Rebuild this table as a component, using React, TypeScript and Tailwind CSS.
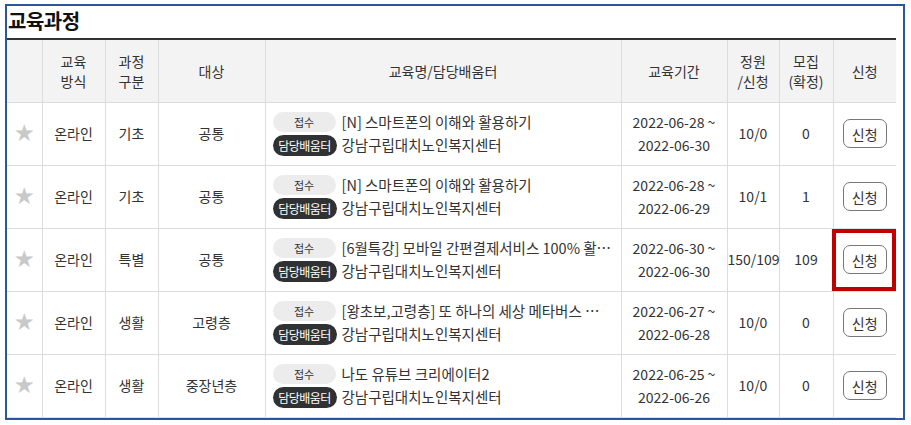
import React from "react";

interface Course {
  method: string;
  kind: string;
  target: string;
  title: string;
  place: string;
  start: string;
  end: string;
  quota: string;
  confirmed: string;
  highlight?: boolean;
}

const courses: Course[] = [
  { method: "온라인", kind: "기초", target: "공통", title: "[N] 스마트폰의 이해와 활용하기", place: "강남구립대치노인복지센터", start: "2022-06-28", end: "2022-06-30", quota: "10/0", confirmed: "0" },
  { method: "온라인", kind: "기초", target: "공통", title: "[N] 스마트폰의 이해와 활용하기", place: "강남구립대치노인복지센터", start: "2022-06-28", end: "2022-06-29", quota: "10/1", confirmed: "1" },
  { method: "온라인", kind: "특별", target: "공통", title: "[6월특강] 모바일 간편결제서비스 100% 활용하기", place: "강남구립대치노인복지센터", start: "2022-06-30", end: "2022-06-30", quota: "150/109", confirmed: "109", highlight: true },
  { method: "온라인", kind: "생활", target: "고령층", title: "[왕초보,고령층] 또 하나의 세상 메타버스 체험하기", place: "강남구립대치노인복지센터", start: "2022-06-27", end: "2022-06-28", quota: "10/0", confirmed: "0" },
  { method: "온라인", kind: "생활", target: "중장년층", title: "나도 유튜브 크리에이터2", place: "강남구립대치노인복지센터", start: "2022-06-25", end: "2022-06-26", quota: "10/0", confirmed: "0" },
];

const th = "border-l border-b border-[#dcdcdc] font-normal text-center leading-[20px] px-0";
const td = "border-l border-b border-[#dcdcdc] text-center h-[63px] p-0";

export default function App() {
  return (
    <div className="bg-white w-[911px] h-[425px] pt-[4px] pl-[5px]" style={{ fontFamily: '"Noto Sans CJK KR", "Noto Sans", sans-serif' }}>
      <div className="w-[900px] h-[416px] border-2 border-[#2b579a] text-[#333]">
        <h1 className="h-[32px] leading-[30px] text-[20px] font-bold text-[#111] pl-[1px] tracking-[-0.5px]">교육과정</h1>
        <table className="table-fixed border-collapse w-[889px] text-[14px]">
          <colgroup>
            <col className="w-[35px]" />
            <col className="w-[63px]" />
            <col className="w-[53px]" />
            <col className="w-[107px]" />
            <col className="w-[356px]" />
            <col className="w-[106px]" />
            <col className="w-[52px]" />
            <col className="w-[54px]" />
            <col className="w-[63px]" />
          </colgroup>
          <thead>
            <tr className="bg-[#f3f3f3] h-[63px] border-t-2 border-[#333]">
              <th className={th + " border-l-0"}></th>
              <th className={th}>교육<br />방식</th>
              <th className={th}>과정<br />구분</th>
              <th className={th}>대상</th>
              <th className={th}>교육명/담당배움터</th>
              <th className={th}>교육기간</th>
              <th className={th}>정원<br />/신청</th>
              <th className={th}>모집<br />(확정)</th>
              <th className={th}>신청</th>
            </tr>
          </thead>
          <tbody>
            {courses.map((c, i) => (
              <tr key={i}>
                <td className={td + " border-l-0"}>
                  <span className="text-[#c9c9c9] text-[19px] leading-none">★</span>
                </td>
                <td className={td}>{c.method}</td>
                <td className={td}>{c.kind}</td>
                <td className={td}>{c.target}</td>
                <td className={td + " text-left text-[14.5px]"}>
                  <div className="flex flex-col gap-[3px] pl-[7px] pr-[9px]">
                    <div className="flex items-center gap-[6px]">
                      <span className="shrink-0 w-[63px] h-[20px] rounded-full bg-[#ececec] text-[11px] leading-[20px] text-center text-[#333]">접수</span>
                      <span className="min-w-0 truncate leading-[20px]">{c.title}</span>
                    </div>
                    <div className="flex items-center gap-[5px]">
                      <span className="shrink-0 w-[64px] h-[21px] rounded-full bg-[#2f3133] text-white text-[12px] leading-[21px] text-center tracking-[-0.5px]">담당배움터</span>
                      <span className="min-w-0 truncate leading-[20px]">{c.place}</span>
                    </div>
                  </div>
                </td>
                <td className={td + " leading-[23px]"}>
                  {c.start} ~<br />{c.end}
                </td>
                <td className={td + " whitespace-nowrap"}>{c.quota}</td>
                <td className={td}>{c.confirmed}</td>
                <td className={td + " relative"}>
                  <button className="w-[44px] h-[29px] rounded-[7px] border border-[#777] bg-white text-[14px] text-[#333] leading-none">신청</button>
                  {c.highlight && (
                    <div className="absolute left-[-2px] top-0 w-[64px] h-[62px] border-4 border-[#c00000] pointer-events-none" />
                  )}
                </td>
              </tr>
            ))}
          </tbody>
        </table>
      </div>
    </div>
  );
}
